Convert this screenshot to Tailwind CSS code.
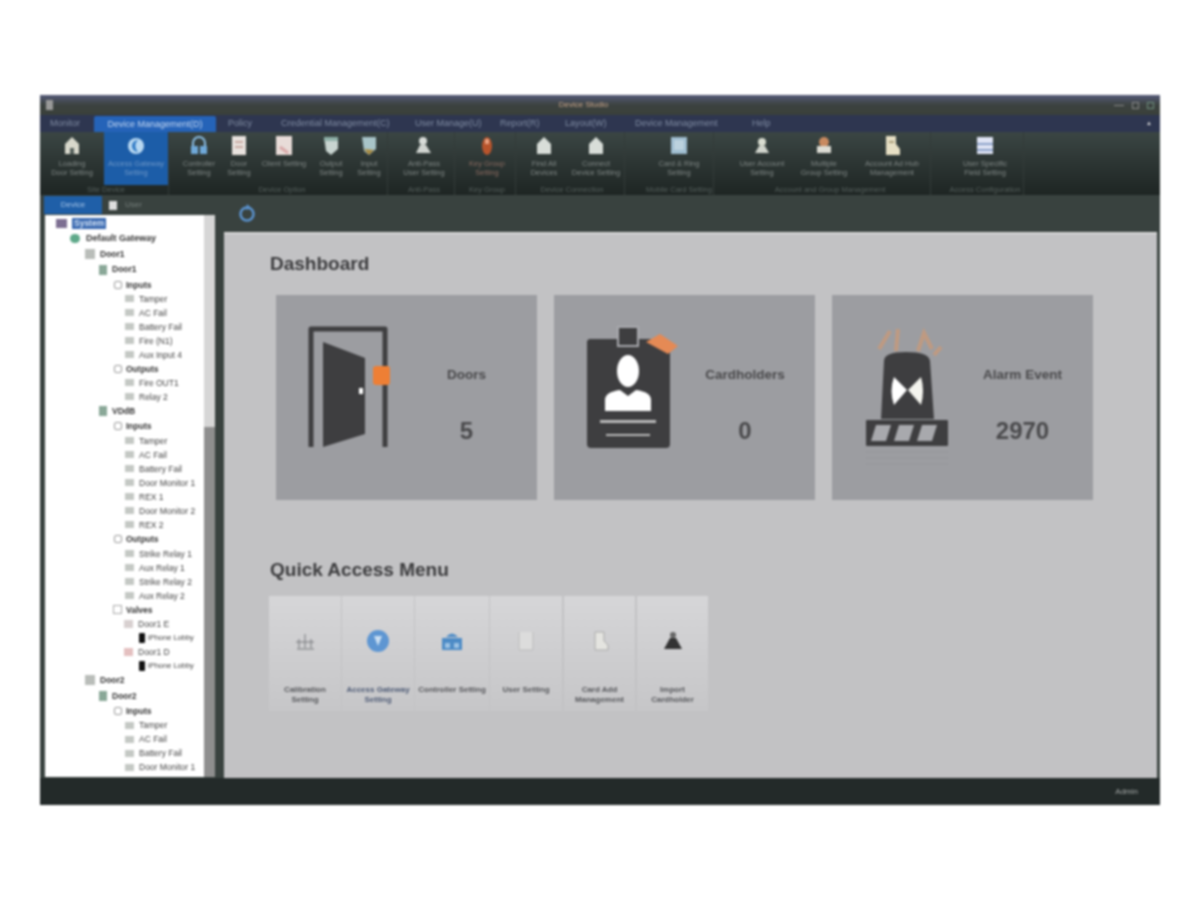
<!DOCTYPE html>
<html lang="en">
<head>
    <meta charset="UTF-8">
    <title>Device Studio</title>
    <script src="https://cdn.jsdelivr.net/npm/@tailwindcss/browser@4"></script>
</head>
<body class="bg-white h-[900px] overflow-hidden font-['Liberation_Sans',sans-serif]">
    <div class="w-[1120px] h-[710px] mt-[95px] mx-auto flex flex-col bg-[#39423f] blur-[1px]">
        <!-- Title bar -->
        <div class="h-[20px] flex items-center px-[6px] bg-gradient-to-b from-[#555a78] via-[#3c4240] to-[#3a403a] relative">
            <div class="w-[7px] h-[10px] bg-[#999]"></div>
            <div class="flex-1 text-center text-[8px] text-[#c9a58a]">Device Studio</div>
            <div class="flex gap-[8px] items-center">
                <div class="w-[10px] h-px bg-[#888]"></div>
                <div class="w-[7px] h-[7px] border border-[#888]"></div>
                <div class="w-[7px] h-[7px] border border-[#6f8f7d]"></div>
            </div>
        </div>
        <!-- Menu tabs -->
        <div class="h-[17px] flex items-center bg-[#2e3650] text-[9px] text-[#7f8ba2] pl-[10px]">
            <span class="w-[44px]">Monitor</span>
            <span class="w-[122px] h-[16px] leading-[16px] text-center bg-[#2563b8] text-[#c5d8f2] rounded-t-[2px]">Device Management(D)</span>
            <span class="w-[58px] pl-[12px]">Policy</span>
            <span class="w-[141px] pl-[7px]">Credential Management(C)</span>
            <span class="w-[85px]">User Manage(U)</span>
            <span class="w-[65px]">Report(R)</span>
            <span class="w-[70px]">Layout(W)</span>
            <span class="w-[117px]">Device Management</span>
            <span>Help</span>
            <span class="ml-auto mr-[8px] text-[#ddd] text-[6px]">▲</span>
        </div>
        <!-- Ribbon -->
        <div class="h-[63px] flex bg-gradient-to-b from-[#3b4644] to-[#1e2523] text-[7.5px] leading-[9px] text-[#7f8684] text-center">
            <div class="ml-[4px] flex flex-col border-r border-[#333b39]">
                <div class="flex h-[53px]">
                    <div class="w-[56px] pt-[3px]"><svg class="mx-auto" width="22" height="22" viewBox="0 0 22 22"><path d="M11 2 L18 9 V19 H4 V9Z" fill="#d8d8cc"/><rect x="9" y="13" width="4" height="6" fill="#55605c"/></svg><div class="mt-[2px]">Loading<br>Door Setting</div></div>
                    <div class="w-[64px] ml-[4px] pt-[3px] bg-[#1c5da8] text-[#6f98c8]"><svg class="mx-auto" width="22" height="22" viewBox="0 0 22 22"><circle cx="11" cy="11" r="8" fill="#b8d8f2"/><path d="M13 5 A6 6 0 0 0 13 17 A8 8 0 0 1 13 5Z" fill="#2e78c4"/></svg><div class="mt-[2px]">Access Gateway<br>Setting</div></div>
                </div>
                <div class="text-[#555f5c]">Site Device</div>
            </div>
            <div class="ml-[8px] flex flex-col border-r border-[#333b39]">
                <div class="flex h-[53px]">
                    <div class="w-[44px] pt-[3px]"><svg class="mx-auto" width="22" height="22" viewBox="0 0 22 22"><path d="M5 12 V8 A6 6 0 0 1 17 8 V12" fill="none" stroke="#8cc0e8" stroke-width="2"/><rect x="3" y="11" width="7" height="8" fill="#6fa8d8"/><rect x="12" y="11" width="7" height="8" fill="#6fa8d8"/></svg><div class="mt-[2px]">Controller<br>Setting</div></div>
                    <div class="w-[36px] pt-[3px]"><svg class="mx-auto" width="22" height="22" viewBox="0 0 22 22"><rect x="4" y="1" width="14" height="19" fill="#e8e2de"/><rect x="7" y="6" width="8" height="2" fill="#c8a8a0"/><rect x="7" y="11" width="8" height="2" fill="#c8a8a0"/></svg><div class="mt-[2px]">Door<br>Setting</div></div>
                    <div class="w-[54px] pt-[3px]"><svg class="mx-auto" width="22" height="22" viewBox="0 0 22 22"><rect x="3" y="1" width="16" height="19" fill="#e8dcd8"/><path d="M7 12 L15 18" stroke="#d8a8a8" stroke-width="3"/></svg><div class="mt-[2px]">Client Setting</div></div>
                    <div class="w-[40px] pt-[3px]"><svg class="mx-auto" width="22" height="22" viewBox="0 0 22 22"><path d="M4 2 H18 V14 L11 20 L6 16Z" fill="#c8d4d0"/><rect x="4" y="2" width="14" height="4" fill="#8fb0a8"/></svg><div class="mt-[2px]">Output<br>Setting</div></div>
                    <div class="w-[36px] pt-[3px]"><svg class="mx-auto" width="22" height="22" viewBox="0 0 22 22"><path d="M4 2 H18 V14 L11 20 L6 16Z" fill="#a8c4c8"/><path d="M6 14 L11 20 L16 15Z" fill="#a88a40"/></svg><div class="mt-[2px]">Input<br>Setting</div></div>
                </div>
                <div class="text-[#555f5c]">Device Option</div>
            </div>
            <div class="ml-[6px] flex flex-col border-r border-[#333b39]">
                <div class="h-[53px] w-[60px] pt-[3px]"><svg class="mx-auto" width="22" height="22" viewBox="0 0 22 22"><circle cx="10" cy="6" r="4" fill="#d8dcd8"/><path d="M3 18 L7 10 H13 L18 18Z" fill="#d0d4d0"/></svg><div class="mt-[2px]">Anti-Pass<br>User Setting</div></div>
                <div class="text-[#555f5c]">Anti-Pass</div>
            </div>
            <div class="ml-[4px] flex flex-col border-r border-[#333b39]">
                <div class="h-[53px] w-[56px] pt-[3px] text-[#8a6a60]"><svg class="mx-auto" width="22" height="22" viewBox="0 0 22 22"><ellipse cx="11" cy="11" rx="5" ry="9" fill="#b8542c"/><rect x="9" y="4" width="4" height="5" fill="#e8a080"/></svg><div class="mt-[2px]">Key Group<br>Setting</div></div>
                <div class="text-[#555f5c]">Key Group</div>
            </div>
            <div class="ml-[4px] flex flex-col border-r border-[#333b39]">
                <div class="flex h-[53px]">
                    <div class="w-[48px] pt-[3px]"><svg class="mx-auto" width="22" height="22" viewBox="0 0 22 22"><path d="M11 2 L18 9 V19 H4 V9Z" fill="#d8ddd8"/></svg><div class="mt-[2px]">Find All<br>Devices</div></div>
                    <div class="w-[56px] pt-[3px]"><svg class="mx-auto" width="22" height="22" viewBox="0 0 22 22"><path d="M11 2 L18 9 V19 H4 V9Z" fill="#d8ddd8"/></svg><div class="mt-[2px]">Connect<br>Device Setting</div></div>
                </div>
                <div class="text-[#555f5c]">Device Connection</div>
            </div>
            <div class="ml-[20px] flex flex-col border-r border-[#333b39]">
                <div class="h-[53px] w-[68px] pt-[3px]"><svg class="mx-auto" width="22" height="22" viewBox="0 0 22 22"><rect x="3" y="2" width="16" height="17" fill="#9fbdd0"/><rect x="6" y="5" width="10" height="10" fill="#bcd2de"/></svg><div class="mt-[2px]">Card &amp; Ring<br>Setting</div></div>
                <div class="text-[#555f5c]">Mobile Card Setting</div>
            </div>
            <div class="ml-[16px] flex flex-col border-r border-[#333b39]">
                <div class="flex h-[53px]">
                    <div class="w-[64px] pt-[3px]"><svg class="mx-auto" width="22" height="22" viewBox="0 0 22 22"><circle cx="11" cy="7" r="4" fill="#d8dcd0"/><path d="M4 18 L8 11 H14 L18 18Z" fill="#d0d4cc"/></svg><div class="mt-[2px]">User Account<br>Setting</div></div>
                    <div class="w-[60px] pt-[3px]"><svg class="mx-auto" width="22" height="22" viewBox="0 0 22 22"><circle cx="11" cy="7" r="5" fill="#c88a60"/><rect x="4" y="11" width="14" height="7" fill="#dcdcd4"/></svg><div class="mt-[2px]">Multiple<br>Group Setting</div></div>
                    <div class="w-[76px] pt-[3px]"><svg class="mx-auto" width="22" height="22" viewBox="0 0 22 22"><path d="M5 1 H15 V9 L19 14 V20 H5Z" fill="#e6dfc4"/><rect x="8" y="6" width="5" height="2" fill="#a89c78"/></svg><div class="mt-[2px]">Account Ad Hub<br>Management</div></div>
                </div>
                <div class="text-[#555f5c]">Account and Group Management</div>
            </div>
            <div class="ml-[16px] flex flex-col border-r border-[#333b39]">
                <div class="h-[53px] w-[76px] pt-[3px]"><svg class="mx-auto" width="22" height="22" viewBox="0 0 22 22"><rect x="3" y="2" width="16" height="17" fill="#dfe4f4"/><rect x="3" y="8" width="16" height="2" fill="#8aa0c8"/><rect x="3" y="14" width="16" height="2" fill="#8aa0c8"/></svg><div class="mt-[2px]">User Specific<br>Field Setting</div></div>
                <div class="text-[#555f5c]">Access Configuration</div>
            </div>
        </div>
        <!-- Body -->
        <div class="flex-1 flex min-h-0">
            <!-- Sidebar -->
            <div class="w-[182px] flex flex-col pl-[5px] pr-[7px]">
                <div class="h-[20px] flex items-center text-[8px] -ml-[1px]">
                    <span class="w-[58px] h-[18px] leading-[18px] text-center bg-[#1f5fa8] text-[#a8c6e8]">Device</span>
                    <span class="w-[8px] h-[9px] bg-[#ddd] ml-[7px]"></span>
                    <span class="ml-[8px] text-[#77807d]">User</span>
                </div>
                <div class="flex h-[562px]">
                    <div class="flex-1 bg-white overflow-hidden pt-[1px] text-[8.5px] text-[#444] leading-[14.2px]">
                        <div class="flex items-center h-[14.6px] pl-[11px]"><span class="w-[11px] h-[9px] mr-[5px] bg-[#7d6f92]"></span><span class="px-[2px] leading-[11px] bg-[#3a69b0] text-[#cfe0f4] font-bold">System</span></div>
                        <div class="flex items-center h-[15.6px] pl-[25px] font-bold text-[#333] text-[9px]"><span class="w-[10px] h-[9px] mr-[6px] rounded-full bg-[#5fa98a]"></span>Default Gateway</div>
                        <div class="flex items-center h-[15.6px] pl-[40px] font-bold text-[#333]"><span class="w-[10px] h-[10px] mr-[5px] bg-[#b9bdb9]"></span>Door1</div>
                        <div class="flex items-center h-[15.6px] pl-[54px] font-bold text-[#333]"><span class="w-[8px] h-[10px] mr-[5px] bg-[#8aa898]"></span>Door1</div>
                        <div class="flex items-center h-[14.6px] pl-[69px] font-bold text-[#333]"><span class="w-[8px] h-[8px] mr-[4px] border border-[#999] rounded-[2px]"></span>Inputs</div>
                        <div class="flex items-center h-[14px] pl-[80px]"><span class="w-[9px] h-[7px] mr-[5px] bg-[#c4c8c4]"></span>Tamper</div>
                        <div class="flex items-center h-[14px] pl-[80px]"><span class="w-[9px] h-[7px] mr-[5px] bg-[#c4c8c4]"></span>AC Fail</div>
                        <div class="flex items-center h-[14px] pl-[80px]"><span class="w-[9px] h-[7px] mr-[5px] bg-[#c4c8c4]"></span>Battery Fail</div>
                        <div class="flex items-center h-[14px] pl-[80px]"><span class="w-[9px] h-[7px] mr-[5px] bg-[#c4c8c4]"></span>Fire (N1)</div>
                        <div class="flex items-center h-[14px] pl-[80px]"><span class="w-[9px] h-[7px] mr-[5px] bg-[#c4c8c4]"></span>Aux Input 4</div>
                        <div class="flex items-center h-[14px] pl-[69px] font-bold text-[#333]"><span class="w-[8px] h-[8px] mr-[4px] border border-[#999] rounded-[2px]"></span>Outputs</div>
                        <div class="flex items-center h-[14px] pl-[80px]"><span class="w-[9px] h-[7px] mr-[5px] bg-[#c4c8c4]"></span>Fire OUT1</div>
                        <div class="flex items-center h-[14px] pl-[80px]"><span class="w-[9px] h-[7px] mr-[5px] bg-[#c4c8c4]"></span>Relay 2</div>
                        <div class="flex items-center h-[15px] pl-[54px] font-bold text-[#333]"><span class="w-[8px] h-[10px] mr-[5px] bg-[#8aa898]"></span>VDdB</div>
                        <div class="flex items-center h-[15px] pl-[69px] font-bold text-[#333]"><span class="w-[8px] h-[8px] mr-[4px] border border-[#999] rounded-[2px]"></span>Inputs</div>
                        <div class="flex items-center h-[14px] pl-[80px]"><span class="w-[9px] h-[7px] mr-[5px] bg-[#c4c8c4]"></span>Tamper</div>
                        <div class="flex items-center h-[14px] pl-[80px]"><span class="w-[9px] h-[7px] mr-[5px] bg-[#c4c8c4]"></span>AC Fail</div>
                        <div class="flex items-center h-[14px] pl-[80px]"><span class="w-[9px] h-[7px] mr-[5px] bg-[#c4c8c4]"></span>Battery Fail</div>
                        <div class="flex items-center h-[14px] pl-[80px]"><span class="w-[9px] h-[7px] mr-[5px] bg-[#c4c8c4]"></span>Door Monitor 1</div>
                        <div class="flex items-center h-[14px] pl-[80px]"><span class="w-[9px] h-[7px] mr-[5px] bg-[#c4c8c4]"></span>REX 1</div>
                        <div class="flex items-center h-[14px] pl-[80px]"><span class="w-[9px] h-[7px] mr-[5px] bg-[#c4c8c4]"></span>Door Monitor 2</div>
                        <div class="flex items-center h-[14px] pl-[80px]"><span class="w-[9px] h-[7px] mr-[5px] bg-[#c4c8c4]"></span>REX 2</div>
                        <div class="flex items-center h-[15px] pl-[69px] font-bold text-[#333]"><span class="w-[8px] h-[8px] mr-[4px] border border-[#999] rounded-[2px]"></span>Outputs</div>
                        <div class="flex items-center h-[14px] pl-[80px]"><span class="w-[9px] h-[7px] mr-[5px] bg-[#c4c8c4]"></span>Strike Relay 1</div>
                        <div class="flex items-center h-[14px] pl-[80px]"><span class="w-[9px] h-[7px] mr-[5px] bg-[#c4c8c4]"></span>Aux Relay 1</div>
                        <div class="flex items-center h-[14px] pl-[80px]"><span class="w-[9px] h-[7px] mr-[5px] bg-[#c4c8c4]"></span>Strike Relay 2</div>
                        <div class="flex items-center h-[14px] pl-[80px]"><span class="w-[9px] h-[7px] mr-[5px] bg-[#c4c8c4]"></span>Aux Relay 2</div>
                        <div class="flex items-center h-[14px] pl-[68px] font-bold text-[#333]"><span class="w-[9px] h-[9px] mr-[4px] border border-[#aaa]"></span>Valves</div>
                        <div class="flex items-center h-[14px] pl-[79px]"><span class="w-[9px] h-[8px] mr-[5px] bg-[#d8d0d0]"></span>Door1 E</div>
                        <div class="flex items-center h-[14px] pl-[94px] text-[7.5px] whitespace-nowrap"><span class="shrink-0 w-[6px] h-[10px] mr-[3px] bg-[#111] rounded-[1px]"></span>iPhone Lobby</div>
                        <div class="flex items-center h-[14px] pl-[79px]"><span class="w-[9px] h-[8px] mr-[5px] bg-[#e4c0c0]"></span>Door1 D</div>
                        <div class="flex items-center h-[14px] pl-[94px] text-[7.5px] whitespace-nowrap"><span class="shrink-0 w-[6px] h-[10px] mr-[3px] bg-[#111] rounded-[1px]"></span>iPhone Lobby</div>
                        <div class="flex items-center h-[15px] pl-[40px] font-bold text-[#333]"><span class="w-[10px] h-[10px] mr-[5px] bg-[#b9bdb9]"></span>Door2</div>
                        <div class="flex items-center h-[15.6px] pl-[54px] font-bold text-[#333]"><span class="w-[8px] h-[10px] mr-[5px] bg-[#8aa898]"></span>Door2</div>
                        <div class="flex items-center h-[15px] pl-[69px] font-bold text-[#333]"><span class="w-[8px] h-[8px] mr-[4px] border border-[#999] rounded-[2px]"></span>Inputs</div>
                        <div class="flex items-center h-[14px] pl-[80px]"><span class="w-[9px] h-[7px] mr-[5px] bg-[#c4c8c4]"></span>Tamper</div>
                        <div class="flex items-center h-[14px] pl-[80px]"><span class="w-[9px] h-[7px] mr-[5px] bg-[#c4c8c4]"></span>AC Fail</div>
                        <div class="flex items-center h-[14px] pl-[80px]"><span class="w-[9px] h-[7px] mr-[5px] bg-[#c4c8c4]"></span>Battery Fail</div>
                        <div class="flex items-center h-[14px] pl-[80px]"><span class="w-[9px] h-[7px] mr-[5px] bg-[#c4c8c4]"></span>Door Monitor 1</div>
                    </div>
                    <!-- Scrollbar -->
                    <div class="w-[11px] bg-[#d6d6d6] flex flex-col justify-end">
                        <div class="h-[350px] bg-[#8e8e8e]"></div>
                    </div>
                </div>
            </div>
            <!-- Main -->
            <div class="flex-1 flex flex-col min-w-0">
                <div class="h-[37px] flex items-center pl-[15px]">
                    <svg width="20" height="20" viewBox="0 0 20 20"><circle cx="10" cy="10" r="6.5" fill="none" stroke="#5b93cf" stroke-width="2.5"/><path d="M10 0 L14 4 L9 6Z" fill="#5b93cf"/></svg>
                </div>
                <div class="h-[546px] ml-[2px] mr-[3px] bg-[#c2c2c4] border-t-2 border-[#d8d8d8] pl-[46px]">
                    <h2 class="h-[61px] pt-[19px] text-[19px] leading-[22px] font-bold text-[#3c3c3e]">Dashboard</h2>
                    <div class="flex gap-[17px] pl-[6px]">
                        <!-- Doors -->
                        <div class="w-[261px] h-[205px] bg-[#9c9da1] flex pl-[30px] pt-[29px]">
                            <svg class="shrink-0" width="90" height="130" viewBox="0 0 90 130">
                                <path d="M5 123 V5 H79 V123" fill="none" stroke="#3e3e40" stroke-width="5" stroke-linejoin="round"/>
                                <path d="M17 18 L59 34 V110 L17 123Z" fill="#3e3e40"/>
                                <rect x="53" y="64" width="4" height="6" fill="#fff"/>
                                <rect x="67" y="42" width="17" height="19" fill="#ee7f35" rx="3"/>
                            </svg>
                            <div class="w-[142px] text-center font-bold text-[#4a4a4c]">
                                <div class="mt-[43px] text-[13.5px] leading-[16px]">Doors</div>
                                <div class="mt-[34px] text-[24px] leading-[28px]">5</div>
                            </div>
                        </div>
                        <!-- Cardholders -->
                        <div class="w-[261px] h-[205px] bg-[#9c9da1] flex pl-[32px] pt-[29px]">
                            <svg class="shrink-0" width="100" height="130" viewBox="0 0 100 130">
                                <path d="M3 15 H70 L84 27 V120 Q84 124 80 124 H5 Q1 124 1 120 V17 Z" fill="#3e3e40"/>
                                <rect x="32" y="3" width="20" height="19" fill="#3e3e40" stroke="#a8a9ad" stroke-width="2"/>
                                <path d="M60 18 L74 10 L92 22 L82 30Z" fill="#e58a55"/>
                                <ellipse cx="42" cy="47" rx="11" ry="16" fill="#fff"/>
                                <path d="M19 87 V76 Q19 68 34 66 L42 72 L50 66 Q65 68 65 76 V87Z" fill="#fff"/>
                                <rect x="14" y="96" width="56" height="3" fill="#b9b9b9"/>
                                <rect x="20" y="110" width="44" height="2" fill="#b9b9b9"/>
                            </svg>
                            <div class="w-[118px] text-center font-bold text-[#4a4a4c]">
                                <div class="mt-[43px] text-[13.5px] leading-[16px]">Cardholders</div>
                                <div class="mt-[34px] text-[24px] leading-[28px]">0</div>
                            </div>
                        </div>
                        <!-- Alarm -->
                        <div class="w-[261px] h-[205px] bg-[#9c9da1] flex pl-[32px] pt-[28px]">
                            <svg class="shrink-0" width="90" height="146" viewBox="0 0 90 146">
                                <g stroke="#cf9a74" stroke-width="4" fill="none" opacity="0.7"><path d="M15 26 L26 8"/><path d="M32 28 L34 6"/><path d="M54 28 L60 10 L68 26"/><path d="M70 32 L77 24"/></g>
                                <path d="M17 96 L20 38 Q20 29 42 29 Q65 29 66 38 L70 96Z" fill="#3e3e40"/>
                                <path d="M30 54 L43 67 L30 82 Q25 68 30 54Z" fill="#fff"/>
                                <path d="M57 54 L44 67 L57 82 Q61 68 57 54Z" fill="#f4f4ee"/>
                                <rect x="2" y="97" width="82" height="26" fill="#3e3e40" rx="1"/>
                                <path d="M12 102 H27 L22 118 H7Z" fill="#a8a9ad"/><path d="M35 102 H50 L45 118 H30Z" fill="#a8a9ad"/><path d="M58 102 H73 L68 118 H53Z" fill="#a8a9ad"/>
                                <g stroke="#94959a"><path d="M2 129 H84"/><path d="M2 135 H84"/><path d="M2 141 H84"/></g>
                            </svg>
                            <div class="w-[142px] text-center font-bold text-[#4a4a4c] -ml-[2px]">
                                <div class="mt-[44px] text-[13.5px] leading-[16px]">Alarm Event</div>
                                <div class="mt-[34px] text-[24px] leading-[28px]">2970</div>
                            </div>
                        </div>
                    </div>
                    <h2 class="h-[96px] pt-[59px] text-[19px] leading-[22px] font-bold text-[#3c3c3e]">Quick Access Menu</h2>
                    <div class="flex -ml-px text-[8px] leading-[10px] font-bold text-[#55565a] text-center">
                        <div class="w-[72px] h-[115px] bg-gradient-to-b from-[#d6d6d8] to-[#c6c6c8] mr-px pt-[33px]"><svg class="mx-auto" width="24" height="24" viewBox="0 0 24 24"><path d="M4 20 H21 M6 10 V19 M12 5 V19 M18 10 V19 M3 13 H21" stroke="#77787c" fill="none"/></svg><div class="mt-[32px]">Calibration<br>Setting</div></div>
                        <div class="w-[72px] h-[115px] bg-gradient-to-b from-[#d6d6d8] to-[#c6c6c8] mr-px pt-[33px] text-[#4d5a75]"><svg class="mx-auto" width="24" height="24" viewBox="0 0 24 24"><circle cx="12" cy="12" r="11" fill="#5e96d2"/><path d="M8 7 H16 L12 17Z" fill="#c9def2"/></svg><div class="mt-[32px]">Access Gateway<br>Setting</div></div>
                        <div class="w-[74px] h-[115px] bg-gradient-to-b from-[#d6d6d8] to-[#c6c6c8] mr-px pt-[33px]"><svg class="mx-auto" width="24" height="24" viewBox="0 0 24 24"><path d="M6 8 Q12 1 18 8Z" fill="#4d8bc6"/><rect x="2" y="9" width="20" height="12" fill="#4d8bc6"/><rect x="5" y="14" width="5" height="5" fill="#9cc2e4"/><rect x="14" y="14" width="5" height="5" fill="#9cc2e4"/></svg><div class="mt-[32px]">Controller Setting</div></div>
                        <div class="w-[72px] h-[115px] bg-gradient-to-b from-[#d6d6d8] to-[#c6c6c8] mr-[2px] pt-[33px]"><svg class="mx-auto" width="24" height="24" viewBox="0 0 24 24"><path d="M5 3 V21 H19 V3" fill="#dcdcdc" stroke="#bbb"/></svg><div class="mt-[32px]">User Setting</div></div>
                        <div class="w-[71px] h-[115px] bg-gradient-to-b from-[#d6d6d8] to-[#c6c6c8] mr-[2px] pt-[33px]"><svg class="mx-auto" width="24" height="24" viewBox="0 0 24 24"><path d="M7 3 H16 V12 L20 16 V21 H7Z" fill="#e4e4e0" stroke="#aaa"/></svg><div class="mt-[32px]">Card Add<br>Management</div></div>
                        <div class="w-[71px] h-[115px] bg-gradient-to-b from-[#d6d6d8] to-[#c6c6c8] pt-[33px]"><svg class="mx-auto" width="24" height="24" viewBox="0 0 24 24"><circle cx="12" cy="6" r="3" fill="#666"/><path d="M9 9 H15 L21 20 H3Z" fill="#333"/></svg><div class="mt-[32px]">Import<br>Cardholder</div></div>
                    </div>
                </div>
            </div>
        </div>
        <!-- Status bar -->
        <div class="h-[27px] bg-[#232a29] flex items-center justify-end pr-[22px] text-[8px] text-[#a5a9a8]">Admin</div>
    </div>
</body>
</html>
